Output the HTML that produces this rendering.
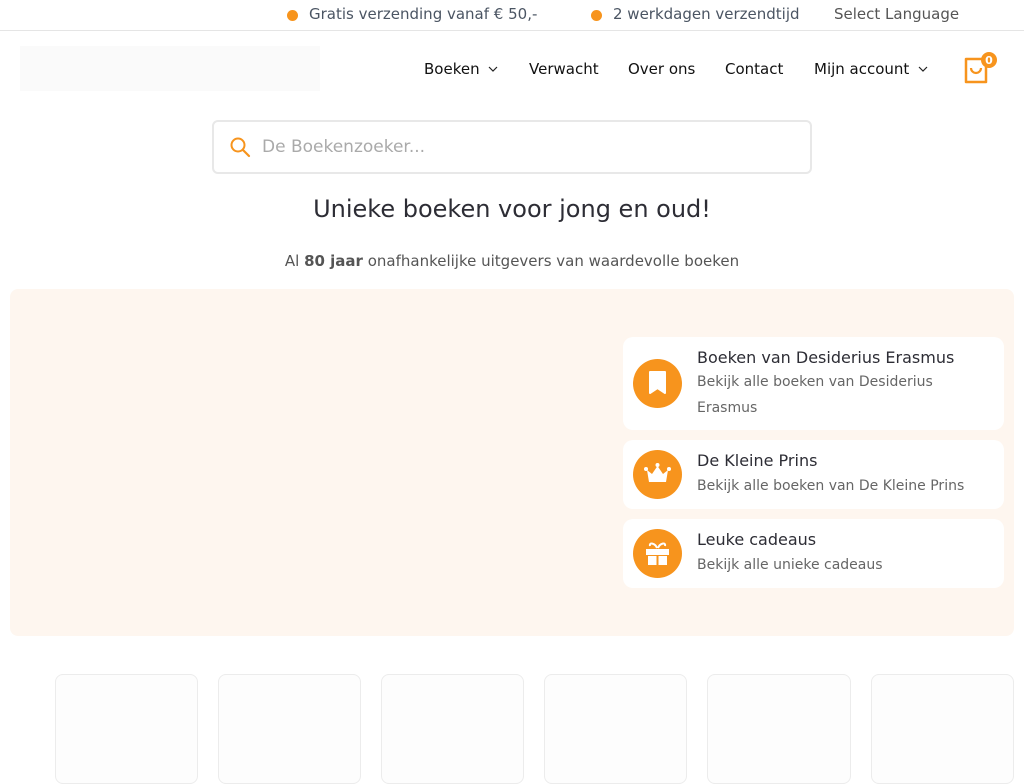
<!DOCTYPE html>
<html><head><meta charset="utf-8"><style>
*{box-sizing:border-box;margin:0;padding:0}
body{width:1024px;height:768px;overflow:hidden;background:#fff;font-family:"DejaVu Sans",sans-serif;color:#333;position:relative}
.a{position:absolute;white-space:nowrap}
.top{font-size:15px;color:#4b5563}
.dot{display:inline-block;width:11px;height:11px;border-radius:50%;background:#f7941d;position:absolute}
.nav{font-size:15px;color:#111}
.card{position:absolute;left:623px;width:381px;background:#fff;border-radius:10px}
.ic{position:absolute;left:10px;width:49px;height:49px;border-radius:50%;background:#f7941d}
.t{position:absolute;left:74px;font-size:16px;color:#2d2d35}
.s{position:absolute;left:74px;font-size:14px;color:#666;line-height:26px}
.box{position:absolute;top:674px;width:143px;height:110px;border:1px solid #ececec;border-radius:8px;background:#fdfdfd}
.chev{position:absolute}
</style></head><body>
<span class="dot" style="left:287px;top:10px"></span><span class="a top" style="left:309px;top:5px">Gratis verzending vanaf € 50,-</span>
<span class="dot" style="left:591px;top:10px"></span><span class="a top" style="left:613px;top:5px">2 werkdagen verzendtijd</span>
<span class="a top" style="left:834px;top:5px;color:#555">Select Language</span>
<div class="a" style="left:0;top:30px;width:1024px;height:1px;background:#e5e5e5"></div>
<div class="a" style="left:20px;top:46px;width:300px;height:45px;background:#fafafa"></div>
<span class="a nav" style="left:424px;top:60px">Boeken</span>
<svg class="chev" style="left:488px;top:66px" width="10" height="6"><path d="M1 1l4 4 4-4" fill="none" stroke="#222" stroke-width="1.2"/></svg>
<span class="a nav" style="left:529px;top:60px">Verwacht</span>
<span class="a nav" style="left:628px;top:60px">Over ons</span>
<span class="a nav" style="left:725px;top:60px">Contact</span>
<span class="a nav" style="left:814px;top:60px">Mijn account</span>
<svg class="chev" style="left:918px;top:66px" width="10" height="6"><path d="M1 1l4 4 4-4" fill="none" stroke="#222" stroke-width="1.2"/></svg>
<svg class="a" style="left:962px;top:50px" width="40" height="36" viewBox="0 0 40 36"><path d="M4 9h20v23H4z" fill="none" stroke="#f7941d" stroke-width="2.5" stroke-linejoin="round"/><path d="M9 18a5 5 0 0 0 10 0" fill="none" stroke="#f7941d" stroke-width="2.2"/><circle cx="27" cy="10" r="8" fill="#f7941d"/><text x="27" y="14" font-size="11" font-weight="bold" fill="#fff" text-anchor="middle" font-family="DejaVu Sans">0</text></svg>
<div class="a" style="left:212px;top:120px;width:600px;height:54px;border:2px solid #e8e8e8;border-radius:6px"></div>
<svg class="a" style="left:229px;top:136px" width="22" height="22" viewBox="0 0 22 22"><circle cx="9" cy="9" r="6.5" fill="none" stroke="#f7941d" stroke-width="2"/><path d="M14 14l6 6" stroke="#f7941d" stroke-width="2.2" stroke-linecap="round"/></svg>
<span class="a" style="left:262px;top:137px;font-size:17px;color:#aaa">De Boekenzoeker...</span>
<div class="a" style="left:0;width:1024px;top:195px;text-align:center;font-size:24px;color:#2d2d35">Unieke boeken voor jong en oud!</div>
<div class="a" style="left:0;width:1024px;top:252px;text-align:center;font-size:15px;color:#555">Al <b>80 jaar</b> onafhankelijke uitgevers van waardevolle boeken</div>
<div class="a" style="left:10px;top:289px;width:1004px;height:347px;background:#fef6ef;border-radius:8px"></div>
<div class="card" style="top:337px;height:93px"><div class="ic" style="top:22px"><svg width="49" height="49"><path d="M17 13h15v21l-7.5-5-7.5 5z" fill="#fff" stroke="#fff" stroke-linejoin="round" stroke-width="2"/></svg></div><div class="t" style="top:11px">Boeken van Desiderius Erasmus</div><div class="s" style="top:32px">Bekijk alle boeken van Desiderius<br>Erasmus</div></div>
<div class="card" style="top:440px;height:69px"><div class="ic" style="top:10px"><svg width="49" height="49"><path d="M14 20l5 4 5.5-8 5.5 8 5-4-2 12H16z" fill="#fff"/><circle cx="13" cy="19" r="2" fill="#fff"/><circle cx="36" cy="19" r="2" fill="#fff"/><circle cx="24.5" cy="15" r="2" fill="#fff"/></svg></div><div class="t" style="top:11px">De Kleine Prins</div><div class="s" style="top:33px">Bekijk alle boeken van De Kleine Prins</div></div>
<div class="card" style="top:519px;height:69px"><div class="ic" style="top:10px"><svg width="49" height="49"><rect x="13" y="20" width="23" height="6" fill="#fff"/><rect x="15" y="27" width="8.5" height="9" fill="#fff"/><rect x="25.5" y="27" width="8.5" height="9" fill="#fff"/><path d="M24 19c-2-5-8-6-7-2M25 19c2-5 8-6 7-2" stroke="#fff" stroke-width="2" fill="none"/></svg></div><div class="t" style="top:11px">Leuke cadeaus</div><div class="s" style="top:33px">Bekijk alle unieke cadeaus</div></div>
<div class="box" style="left:55px"></div><div class="box" style="left:218px"></div><div class="box" style="left:381px"></div><div class="box" style="left:544px"></div><div class="box" style="left:707px;width:144px"></div><div class="box" style="left:871px"></div>
</body></html>
